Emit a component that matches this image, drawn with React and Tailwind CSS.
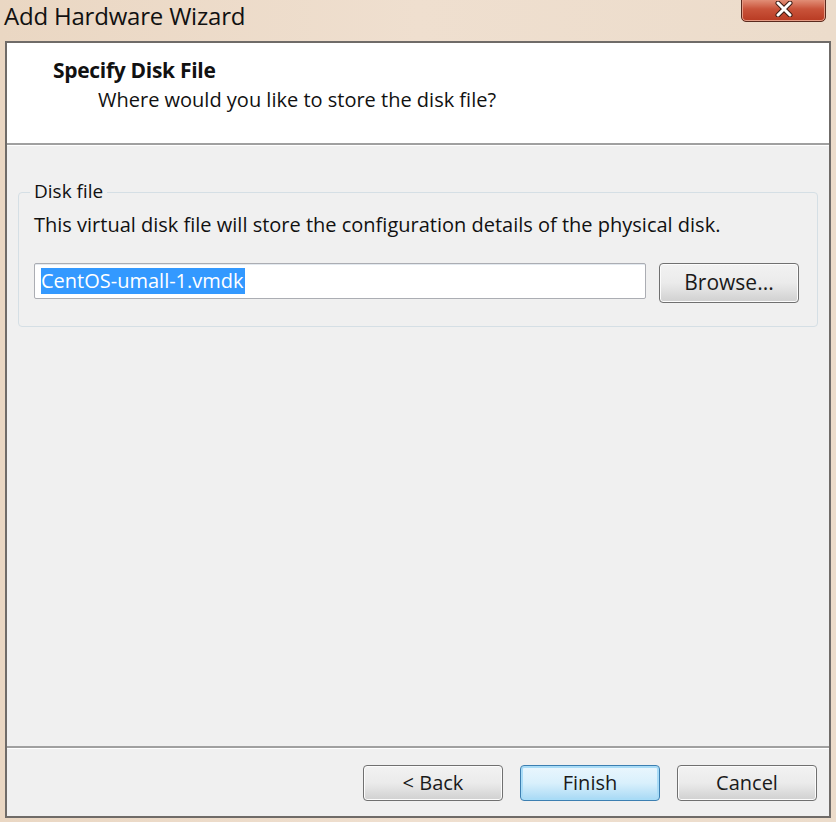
const font = { fontFamily: '"Open Sans", "Noto Sans", "DejaVu Sans", sans-serif' };

function WinButton({ children, primary, className = '' }) {
  return (
    <button
      className={`flex items-center justify-center rounded-[4px] border text-[20px] text-[#1a1a1a] ${
        primary
          ? 'border-[#3c7fb1] bg-gradient-to-b from-[#eaf6fd] via-[#d9f0fc] to-[#a7d9f5] shadow-[inset_0_0_0_2px_#a9dcf7]'
          : 'border-[#707070] bg-gradient-to-b from-[#f2f2f2] via-[#ebebeb] to-[#d0d0d0] shadow-[inset_0_0_0_1px_#fcfcfc]'
      } ${className}`}
    >
      {children}
    </button>
  );
}

export default function App() {
  return (
    <div
      className="w-[836px] h-[822px] flex flex-col bg-gradient-to-r from-[#ead7c3] via-[#efdfcf] to-[#ecdccb] overflow-hidden"
      style={font}
    >
      {/* Title bar */}
      <div className="h-[41px] flex items-start shrink-0">
        <div className="pl-[4px] pt-[1px] text-[24px] leading-[30px] text-[#111] tracking-[-0.2px]">Add Hardware Wizard</div>
        <div className="ml-auto mr-[10px] mt-[-4px] w-[85px] h-[26px] rounded-b-[5px] border border-[#5a2a1e] bg-gradient-to-b from-[#e8a08a] via-[#c9533a] to-[#b83a22] flex items-center justify-center shadow-[inset_0_0_0_1px_#e59b85]">
          <svg width="22" height="16" viewBox="0 0 22 16">
            <path d="M5 2 L17 14 M17 2 L5 14" stroke="#3a1a12" strokeWidth="5" strokeLinecap="round" />
            <path d="M5 2 L17 14 M17 2 L5 14" stroke="#fff" strokeWidth="3" strokeLinecap="round" />
          </svg>
        </div>
      </div>

      {/* Client */}
      <div className="ml-[5px] mr-[5px] h-[777px] border-2 border-[#6f6b68] flex flex-col">
        {/* Header */}
        <div className="h-[100px] bg-white shrink-0 pl-[46px] pt-[14px]">
          <div className="text-[21px] font-bold text-[#111] leading-[26px] tracking-[-0.3px]">Specify Disk File</div>
          <div className="pl-[45px] mt-[4px] text-[20px] text-[#111] leading-[26px]">Where would you like to store the disk file?</div>
        </div>
        <div className="h-[2px] bg-[#a0a0a0] shrink-0" />
        <div className="h-[1px] bg-white shrink-0" />

        {/* Body */}
        <div className="flex-1 bg-[#f0f0f0] px-[11px] pt-[46px]">
          <div className="relative rounded-[4px] border border-[#d5dfe5] h-[135px] pl-[15px] pr-[17px] pt-[19px]">
            <div className="absolute left-[11px] top-[-15px] px-[4px] bg-[#f0f0f0] text-[19px] leading-[26px] text-[#111]">
              Disk file
            </div>
            <div className="text-[20px] leading-[26px] text-[#111]">
              This virtual disk file will store the configuration details of the physical disk.
            </div>
            <div className="mt-[25px] flex items-start gap-[13px]">
              <div className="w-[612px] h-[36px] bg-white border border-[#abadb3] rounded-[2px] flex items-center pl-[6px] shadow-[inset_0_1px_0_#e3e9ef]">
                <span className="bg-[#3399ff] text-white text-[20px] leading-[26px] pr-[1px]">CentOS-umall-1.vmdk</span>
              </div>
              <WinButton className="w-[140px] h-[40px] text-[21px]">Browse...</WinButton>
            </div>
          </div>
        </div>

        {/* Footer */}
        <div className="bg-[#f0f0f0] shrink-0">
          <div className="h-[2px] bg-[#a0a0a0]" />
          <div className="h-[1px] bg-white" />
          <div className="h-[67px] flex items-start justify-end gap-[17px] pr-[12px] pt-[16px]">
            <WinButton className="w-[140px] h-[36px]">&lt; Back</WinButton>
            <WinButton primary className="w-[140px] h-[36px]">Finish</WinButton>
            <WinButton className="w-[140px] h-[36px]">Cancel</WinButton>
          </div>
        </div>
      </div>
    </div>
  );
}
